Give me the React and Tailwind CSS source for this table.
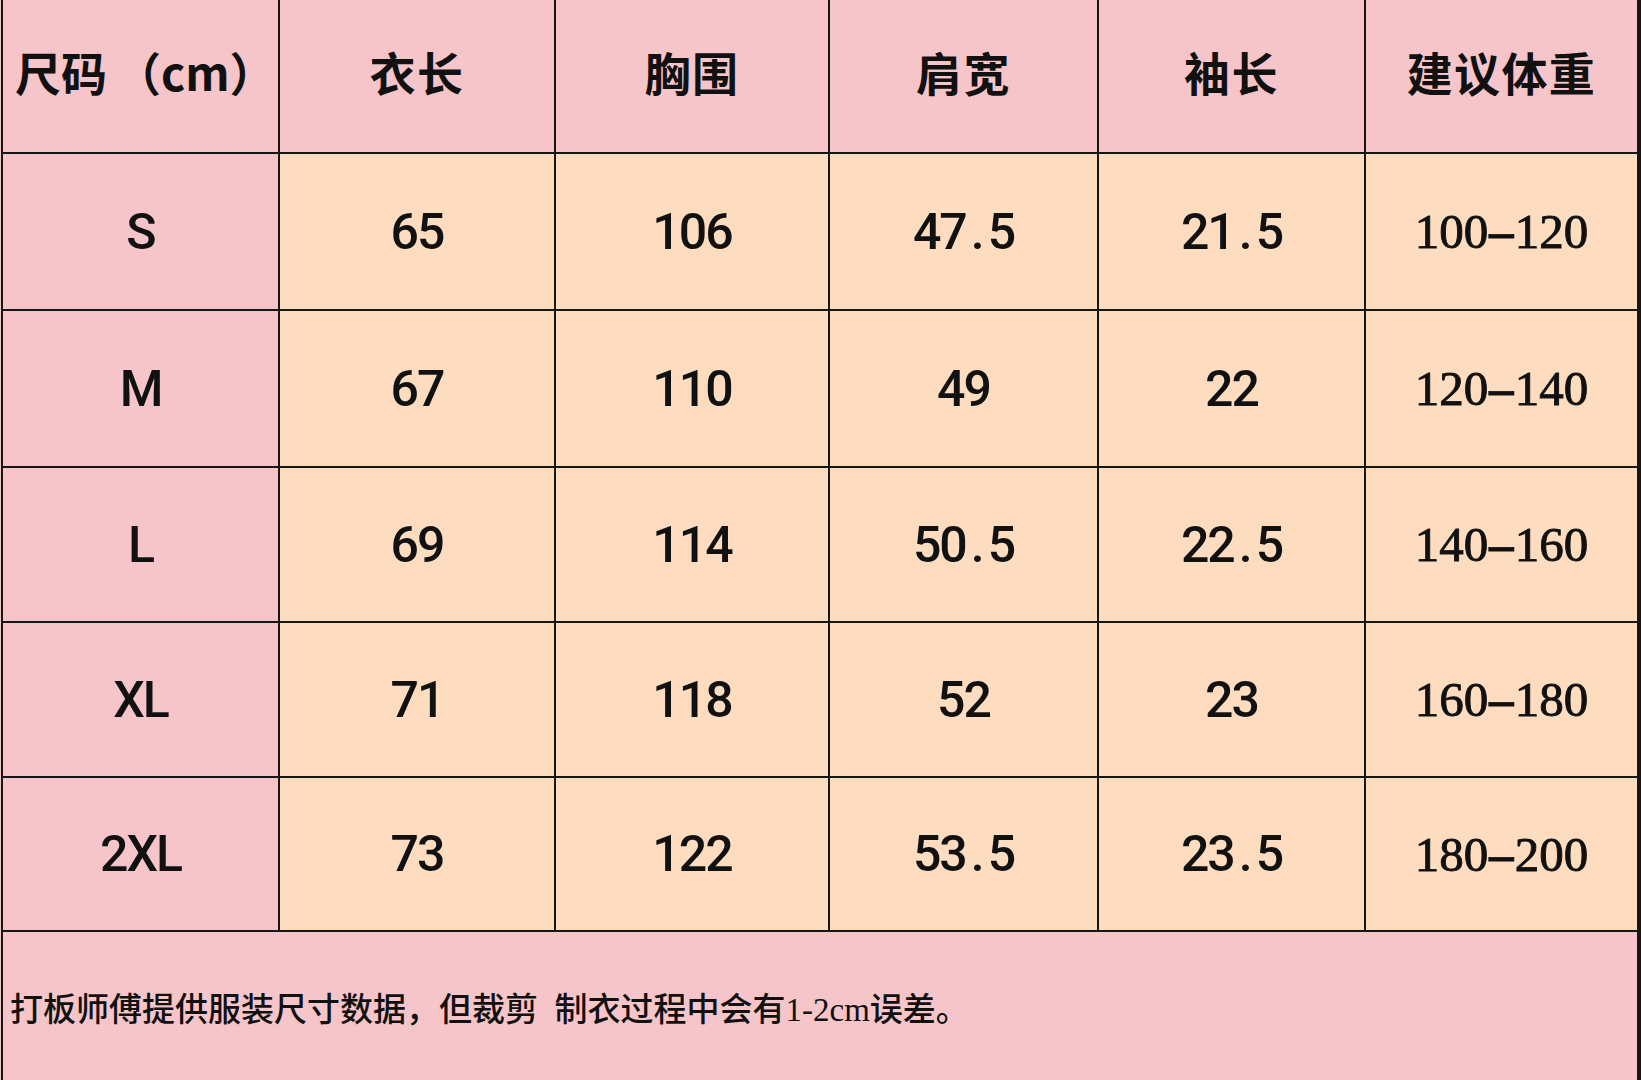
import React from "react";

const headers = ["尺码（cm）", "衣长", "胸围", "肩宽", "袖长", "建议体重"];
const rows = [
  ["S", "65", "106", "47.5", "21.5", "100-120"],
  ["M", "67", "110", "49", "22", "120-140"],
  ["L", "69", "114", "50.5", "22.5", "140-160"],
  ["XL", "71", "118", "52", "23", "160-180"],
  ["2XL", "73", "122", "53.5", "23.5", "180-200"],
];

function Num({ value }) {
  const parts = value.split(".");
  if (parts.length === 1) return <>{value}</>;
  return (
    <>
      {parts[0]}
      <span className="px-[5px]">.</span>
      {parts[1]}
    </>
  );
}

function Range({ value }) {
  const [a, b] = value.split("-");
  return (
    <>
      {a}
      <span className="inline-block scale-x-[1.9] px-[5px]">-</span>
      {b}
    </>
  );
}

export default function App() {
  return (
    <div className="w-[1641px] h-[1080px] bg-[#f6c5ca] overflow-hidden">
      <div className="ml-[1px] w-[1640px] h-[1080px] bg-[#161616] px-[2px] grid grid-cols-[275px_274px_272px_267px_265px_271px] grid-rows-[152px_155px_155px_153px_153px_152px_1fr] gap-[2px]">
        {headers.map((h, i) => (
          <div
            key={h}
            className={
              "bg-[#f6c5ca] flex items-center pb-[10px] text-[46px] font-semibold text-[#111] leading-none " +
              (i === 0 ? "justify-start pl-[12px]" : "justify-center tracking-[0.03em]")
            }
            style={{ fontFamily: '"Noto Sans CJK SC", "Noto Sans", sans-serif' }}
          >
            {i === 0 ? (
              <>
                尺码<span className="pl-[8px]">（cm）</span>
              </>
            ) : (
              h
            )}
          </div>
        ))}
        {rows.map((r) =>
          r.map((c, j) => (
            <div
              key={r[0] + j}
              className={
                (j === 0 ? "bg-[#f6c5ca]" : "bg-[#fddcc0]") +
                " flex items-center justify-center text-[#111] leading-none " +
                (j === 5
                  ? "text-[49px] font-normal [-webkit-text-stroke:0.9px_#111]"
                  : "text-[50px] font-medium tracking-[-0.04em]")
              }
              style={{
                fontFamily:
                  j === 5
                    ? '"Liberation Serif", serif'
                    : 'Roboto, "Noto Sans", sans-serif',
              }}
            >
              {j === 5 ? <Range value={c} /> : <Num value={c} />}
            </div>
          ))
        )}
        <div
          className="col-span-6 bg-[#f6c5ca] flex items-center pl-[7px] pt-[8px] text-[33px] font-medium text-[#111] leading-none"
          style={{ fontFamily: '"Liberation Serif", "Noto Sans CJK SC", serif' }}
        >
          打板师傅提供服装尺寸数据，但裁剪&nbsp;&nbsp;制衣过程中会有1-2cm误差。
        </div>
      </div>
    </div>
  );
}
